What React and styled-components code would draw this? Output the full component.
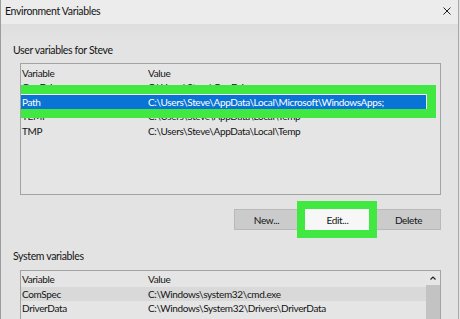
import React from "react";
import styled, { createGlobalStyle } from "styled-components";

const GlobalStyle = createGlobalStyle`
  html, body {
    margin: 0;
    padding: 0;
    background: #e3e3e3;
  }
  body {
    font-family: Lato, "Noto Sans", "Liberation Sans", sans-serif;
    font-size: 10px;
    letter-spacing: -0.35px;
    color: #141414;
    overflow: hidden;
  }
`;

const Window = styled.div`
  width: 459px;
  height: 319px;
  overflow: hidden;
  box-sizing: border-box;
  border-left: 1px solid #9c9c9c;
  border-right: 1px solid #a8a8a8;
  background: #e2e2e2;
  display: flex;
  flex-direction: column;
`;

const TitleBar = styled.div`
  height: 22px;
  flex: none;
  background: #ececec;
  display: flex;
  align-items: center;
  justify-content: space-between;
  padding: 0 7px 2px 4px;
  font-size: 10.5px;
`;

const Close = styled.svg`
  width: 8px;
  height: 8px;
`;

const Body = styled.div`
  display: flex;
  flex-direction: column;
  padding: 0 17px 0 12px;
  background: linear-gradient(#dedede, #e3e3e3 16px);
  flex: 1;
`;

const GroupLabel = styled.div`
  height: 14px;
  line-height: 14px;
  font-size: 10.5px;
  margin-top: ${(p) => p.$top}px;
`;

const ListBox = styled.div`
  margin: ${(p) => p.$gap}px 0 0 7px;
  height: ${(p) => p.$height}px;
  box-sizing: border-box;
  flex: none;
  border: 1px solid #a3a3a3;
  background: #e5e5e5;
  display: flex;
  overflow: hidden;
`;

const Rows = styled.div`
  flex: 1;
  padding-top: ${(p) => p.$pad}px;
  display: flex;
  flex-direction: column;
`;

const Row = styled.div`
  position: relative;
  height: 14.5px;
  flex: none;
  display: flex;
  align-items: center;
  background: ${(p) => (p.$selected ? "#0a74d6" : p.$hover ? "#d9d9d9" : "transparent")};
  color: ${(p) => (p.$selected ? "#fff" : "inherit")};
  box-shadow: ${(p) => (p.$selected ? "0 0 0 1px #f4f4f4" : "none")};
`;

const NameCell = styled.span`
  width: 126px;
  padding-left: 1px;
  white-space: nowrap;
`;

const ValueCell = styled.span`
  white-space: nowrap;
`;

const Gutter = styled.div`
  width: 14px;
  flex: none;
  display: flex;
  flex-direction: column;
`;

const ScrollArrow = styled.div`
  height: 14px;
  flex: none;
  display: flex;
  align-items: center;
  justify-content: center;
  background: #e6e6e6;
`;

const ScrollThumb = styled.div`
  flex: 1;
  background: #c3c3c3;
`;

const Highlight = styled.div`
  position: absolute;
  z-index: 2;
  top: ${(p) => p.$t}px;
  right: ${(p) => p.$r}px;
  bottom: ${(p) => p.$b}px;
  left: ${(p) => p.$l}px;
  border: ${(p) => p.$w}px solid #41e841;
  pointer-events: none;
`;

const ButtonRow = styled.div`
  margin-top: 14px;
  display: flex;
  justify-content: flex-end;
  gap: 6px;
`;

const Button = styled.div`
  position: relative;
  width: 65px;
  height: 21px;
  box-sizing: border-box;
  display: flex;
  align-items: center;
  justify-content: center;
  background: ${(p) => (p.$focused ? "#f7f7f7" : "#cbcbcb")};
  border: 1px solid ${(p) => (p.$focused ? "#f7f7f7" : "#b9b9b9")};
`;

const userVars = [
  { name: "OneDrive", value: "C:\\Users\\Steve\\OneDrive" },
  { name: "Path", value: "C:\\Users\\Steve\\AppData\\Local\\Microsoft\\WindowsApps;", selected: true },
  { name: "TEMP", value: "C:\\Users\\Steve\\AppData\\Local\\Temp" },
  { name: "TMP", value: "C:\\Users\\Steve\\AppData\\Local\\Temp" },
];

const systemVars = [
  { name: "ComSpec", value: "C:\\Windows\\system32\\cmd.exe", hover: true },
  { name: "DriverData", value: "C:\\Windows\\System32\\Drivers\\DriverData" },
  { name: "NUMBER_OF_PROCESSORS", value: "4" },
  { name: "OS", value: "Windows_NT" },
];

const VarRow = ({ v }) => (
  <Row $selected={v.selected} $hover={v.hover}>
    <NameCell>{v.name}</NameCell>
    <ValueCell>{v.value}</ValueCell>
    {v.selected && <Highlight $t={-10} $r={-10} $b={-9} $l={-11} $w={9} />}
  </Row>
);

export default function App() {
  return (
    <>
      <GlobalStyle />
      <Window>
        <TitleBar>
          <span>Environment Variables</span>
          <Close viewBox="0 0 8 8">
            <path d="M0.5 0.5 L7.5 7.5 M7.5 0.5 L0.5 7.5" stroke="#222" strokeWidth="1" />
          </Close>
        </TitleBar>
        <Body>
          <GroupLabel $top={19}>User variables for Steve</GroupLabel>
          <ListBox $gap={6} $height={132}>
            <Rows $pad={1.5}>
              <Row>
                <NameCell>Variable</NameCell>
                <ValueCell>Value</ValueCell>
              </Row>
              {userVars.map((v) => (
                <VarRow key={v.name} v={v} />
              ))}
            </Rows>
            <Gutter />
          </ListBox>
          <ButtonRow>
            <Button>New...</Button>
            <Button $focused>
              Edit...
              <Highlight $t={-9} $r={-8} $b={-9} $l={-9} $w={8} />
            </Button>
            <Button>Delete</Button>
          </ButtonRow>
          <GroupLabel $top={19}>System variables</GroupLabel>
          <ListBox $gap={7} $height={120}>
            <Rows $pad={1}>
              <Row>
                <NameCell>Variable</NameCell>
                <ValueCell>Value</ValueCell>
              </Row>
              {systemVars.map((v) => (
                <VarRow key={v.name} v={v} />
              ))}
            </Rows>
            <Gutter>
              <ScrollArrow>
                <svg width="6" height="4" viewBox="0 0 6 4">
                  <path d="M0.5 3.5 L3 1 L5.5 3.5" stroke="#222" strokeWidth="1.2" fill="none" />
                </svg>
              </ScrollArrow>
              <ScrollThumb />
            </Gutter>
          </ListBox>
        </Body>
      </Window>
    </>
  );
}
